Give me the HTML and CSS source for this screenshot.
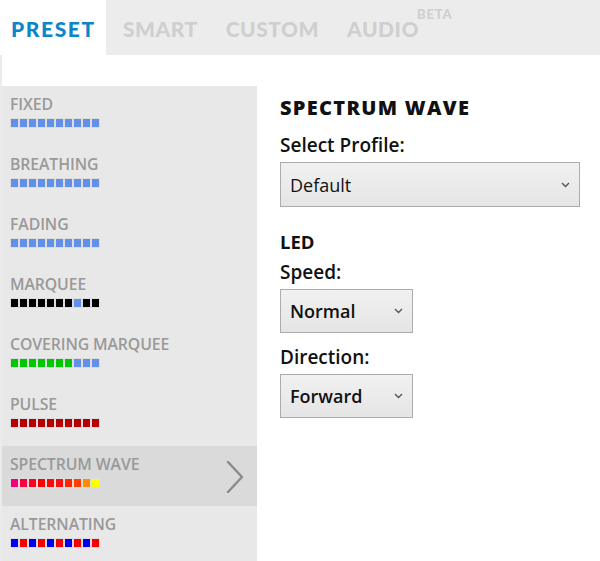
FILE: index.html
```html
<!DOCTYPE html>
<html>
<head>
<meta charset="utf-8">
<link rel="stylesheet" href="styles.css">
</head>
<body>
<div class="app">
  <nav class="tabs">
    <div class="tab active">PRESET</div>
    <div class="tab">SMART</div>
    <div class="tab">CUSTOM</div>
    <div class="tab">AUDIO<sup class="beta">BETA</sup></div>
  </nav>
  <div class="main">
    <ul class="modes">
      <li class="mode">
        <div class="mode-name">FIXED</div>
        <div class="leds"><i class="b"></i><i class="b"></i><i class="b"></i><i class="b"></i><i class="b"></i><i class="b"></i><i class="b"></i><i class="b"></i><i class="b"></i><i class="b"></i></div>
      </li>
      <li class="mode">
        <div class="mode-name">BREATHING</div>
        <div class="leds"><i class="b"></i><i class="b"></i><i class="b"></i><i class="b"></i><i class="b"></i><i class="b"></i><i class="b"></i><i class="b"></i><i class="b"></i><i class="b"></i></div>
      </li>
      <li class="mode">
        <div class="mode-name">FADING</div>
        <div class="leds"><i class="b"></i><i class="b"></i><i class="b"></i><i class="b"></i><i class="b"></i><i class="b"></i><i class="b"></i><i class="b"></i><i class="b"></i><i class="b"></i></div>
      </li>
      <li class="mode">
        <div class="mode-name">MARQUEE</div>
        <div class="leds"><i class="k"></i><i class="k"></i><i class="k"></i><i class="k"></i><i class="k"></i><i class="k"></i><i class="k"></i><i class="b"></i><i class="k"></i><i class="k"></i></div>
      </li>
      <li class="mode">
        <div class="mode-name">COVERING MARQUEE</div>
        <div class="leds"><i class="g"></i><i class="g"></i><i class="g"></i><i class="g"></i><i class="g"></i><i class="g"></i><i class="g"></i><i class="b"></i><i class="b"></i><i class="b"></i></div>
      </li>
      <li class="mode">
        <div class="mode-name">PULSE</div>
        <div class="leds"><i class="r"></i><i class="r"></i><i class="r"></i><i class="r"></i><i class="r"></i><i class="r"></i><i class="r"></i><i class="r"></i><i class="r"></i><i class="r"></i></div>
      </li>
      <li class="mode selected">
        <div class="mode-name">SPECTRUM WAVE</div>
        <div class="leds"><i class="s1"></i><i class="s2"></i><i class="s3"></i><i class="s4"></i><i class="s5"></i><i class="s6"></i><i class="s7"></i><i class="s8"></i><i class="s9"></i><i class="s10"></i></div>
        <svg class="chev" width="18" height="32" viewBox="0 0 18 32"><path d="M2 1 L16 16 L2 31" fill="none" stroke="#8a8a8a" stroke-width="2.4" stroke-linecap="round" stroke-linejoin="round"/></svg>
      </li>
      <li class="mode">
        <div class="mode-name">ALTERNATING</div>
        <div class="leds"><i class="bl"></i><i class="rd"></i><i class="bl"></i><i class="rd"></i><i class="bl"></i><i class="rd"></i><i class="bl"></i><i class="rd"></i><i class="bl"></i><i class="rd"></i></div>
      </li>
    </ul>
    <section class="panel">
      <h2 class="title">SPECTRUM WAVE</h2>
      <div class="label first">Select Profile:</div>
      <div class="select wide"><span class="val">Default</span><svg class="arrow" width="9" height="6" viewBox="0 0 9 6"><path d="M1 1 L4.5 4.5 L8 1" fill="none" stroke="#555" stroke-width="1.4"/></svg></div>
      <div class="section">LED</div>
      <div class="label speed">Speed:</div>
      <div class="select small"><span class="val bold">Normal</span><svg class="arrow" width="9" height="6" viewBox="0 0 9 6"><path d="M1 1 L4.5 4.5 L8 1" fill="none" stroke="#555" stroke-width="1.4"/></svg></div>
      <div class="label dir">Direction:</div>
      <div class="select small"><span class="val bold">Forward</span><svg class="arrow" width="9" height="6" viewBox="0 0 9 6"><path d="M1 1 L4.5 4.5 L8 1" fill="none" stroke="#555" stroke-width="1.4"/></svg></div>
    </section>
  </div>
</div>
</body>
</html>
```

FILE: styles.css
```css
html, body {
  margin: 0;
  padding: 0;
  background: #fff;
}
body {
  width: 600px;
  height: 561px;
  overflow: hidden;
}
.app {
  height: 561px;
  border-left: 2px solid #ebebeb;
  box-sizing: border-box;
}
.tabs {
  display: flex;
  height: 55px;
  background: #ececec;
  font-family: "Lato", "Open Sans", sans-serif;
  font-weight: 900;
  font-size: 21px;
  color: #cfcfcf;
  margin-left: -2px;
}
.tab {
  height: 55px;
  display: flex;
  align-items: center;
  padding-top: 1px;
  box-sizing: border-box;
  margin-right: 28px;
  letter-spacing: 0.5px;
}
.tab.active {
  background: #fff;
  color: #0b86c9;
  padding-left: 11px;
  width: 106px;
  margin-right: 17px;
  letter-spacing: 1.6px;
}
.beta {
  font-size: 13px;
  align-self: flex-start;
  margin-top: 6px;
  margin-left: -2px;
  letter-spacing: 0.8px;
  line-height: 14px;
}
.main {
  display: flex;
  margin-top: 31px;
}
.modes {
  list-style: none;
  margin: 0;
  padding: 0;
  width: 255px;
  height: 475px;
  background: #e8e8e8;
  font-family: "Open Sans", "Noto Sans", sans-serif;
}
.mode {
  position: relative;
  height: 60px;
  padding: 8px 0 0 8px;
  box-sizing: border-box;
}
.mode.selected {
  background: #dadada;
}
.mode-name {
  font-size: 15.8px;
  font-weight: 600;
  color: #999;
  line-height: 20px;
  letter-spacing: -0.1px;
}
.leds {
  display: flex;
  width: 90px;
  height: 10px;
  margin-top: 4px;
  background: #dcdcdc;
}
.leds i {
  display: block;
  width: 7px;
  height: 8px;
  margin: 1px;
}
.b { background: #6290e8; }
.k { background: #000; }
.g { background: #00c800; }
.r { background: #b40000; }
.bl { background: #0000f0; }
.rd { background: #f50000; }
.s1 { background: #f0007a; }
.s2 { background: #f80040; }
.s3 { background: #ff0020; }
.s4 { background: #ff0000; }
.s5 { background: #ff0808; }
.s6 { background: #ff1010; }
.s7 { background: #ff2800; }
.s8 { background: #ff4000; }
.s9 { background: #ff8c00; }
.s10 { background: #ffff00; }
.chev {
  position: absolute;
  right: 13px;
  top: 15px;
}
.panel {
  padding-left: 23px;
  padding-top: 11px;
  font-family: "Open Sans", "Noto Sans", sans-serif;
  color: #111;
}
.title {
  margin: 0;
  font-family: "Open Sans", sans-serif;
  font-weight: 800;
  font-size: 20px;
  letter-spacing: 1.3px;
  line-height: 22px;
}
.label {
  font-size: 19px;
  font-weight: 600;
  line-height: 22px;
}
.label.first { margin-top: 15px; }
.label.speed { margin-top: 8px; }
.label.dir { margin-top: 13px; }
.section {
  font-size: 18.5px;
  font-weight: 700;
  margin-top: 24px;
  line-height: 22px;
}
.select {
  margin-top: 6px;
  height: 45px;
  box-sizing: border-box;
  border: 1px solid #acacac;
  background: linear-gradient(#f1f1f1, #e5e5e5);
  display: flex;
  align-items: center;
  justify-content: space-between;
  padding: 0 9px;
}
.select.wide { width: 300px; }
.select.small { width: 133px; height: 44px; }
.val {
  font-size: 18px;
  color: #111;
}
.val.bold { font-weight: 600; }
```
